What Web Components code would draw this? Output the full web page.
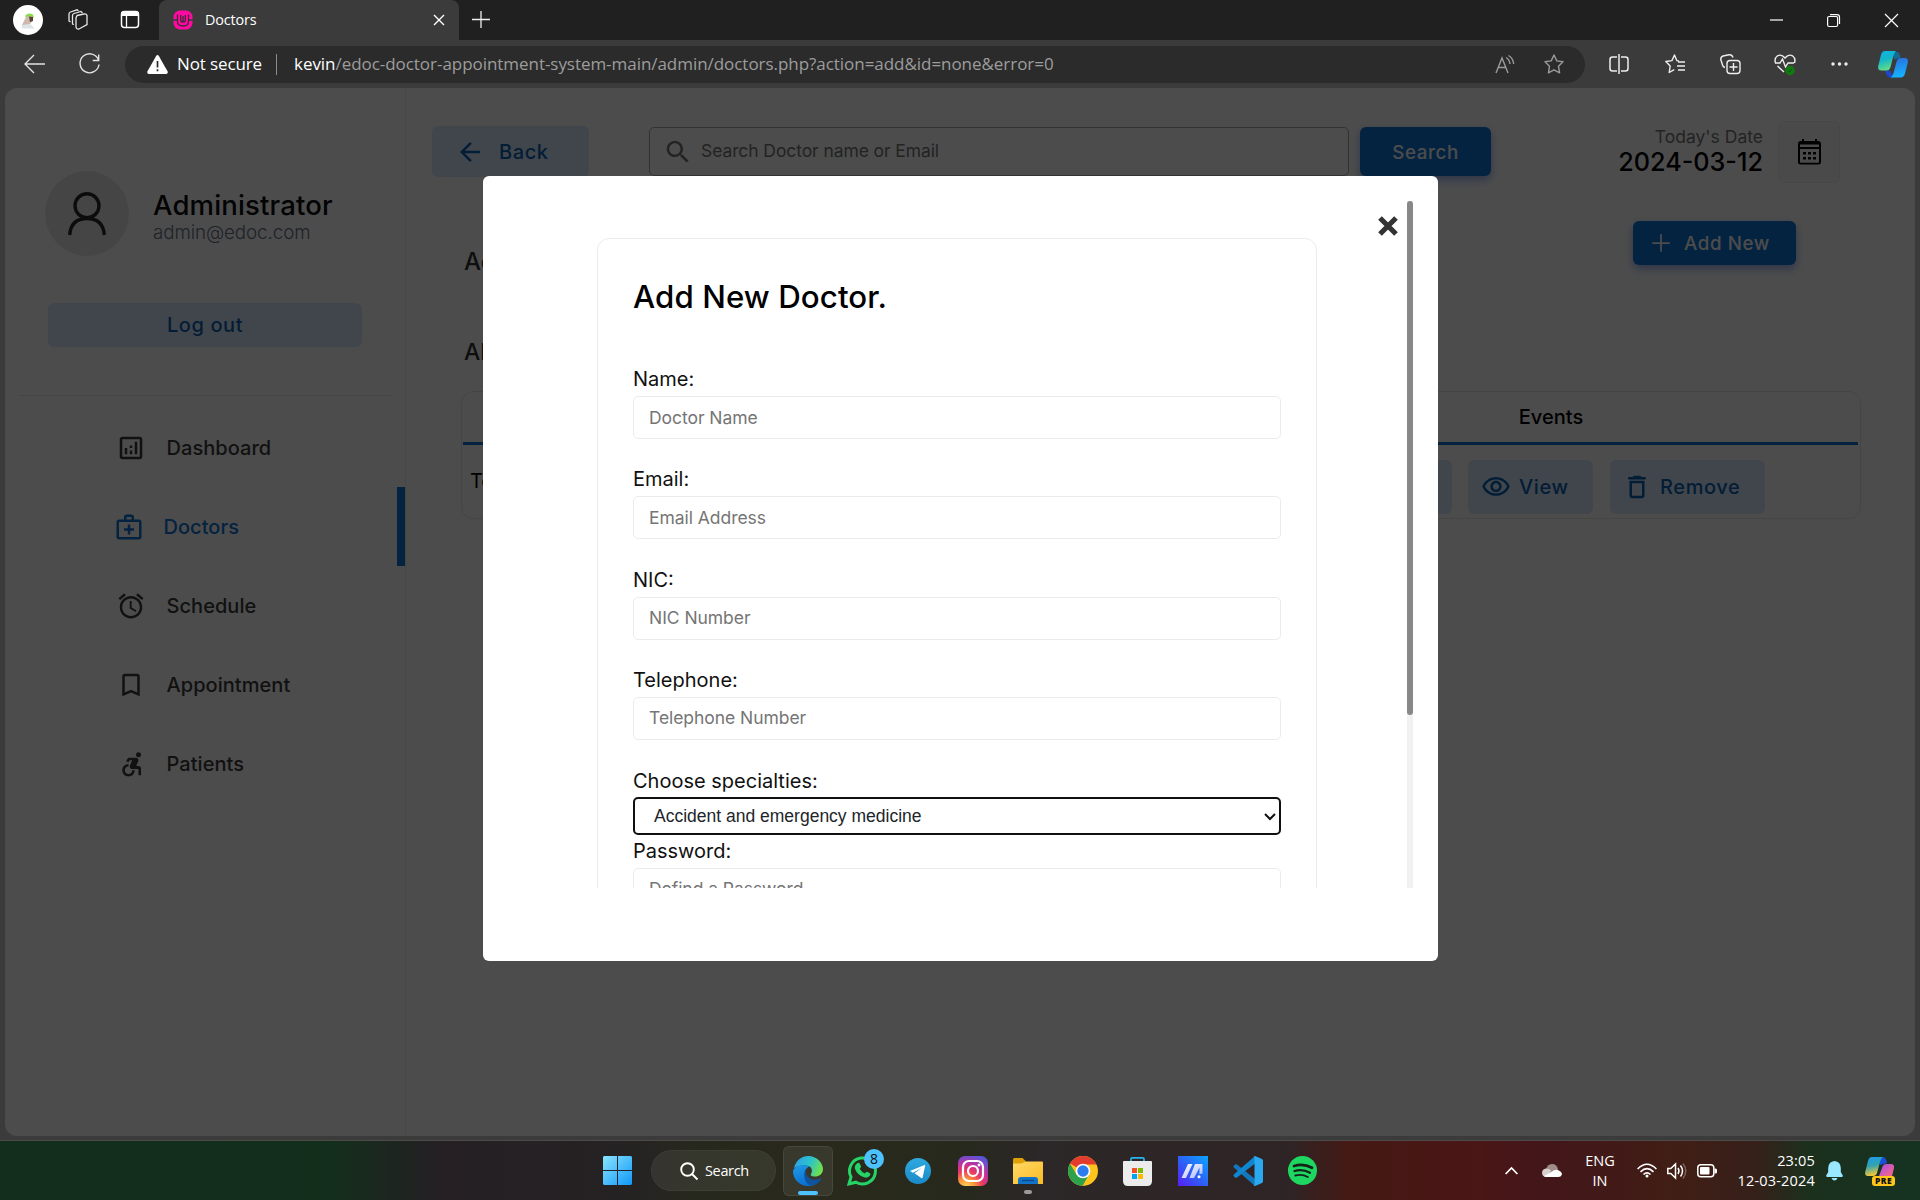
<!DOCTYPE html>
<html lang="en">
<head>
<meta charset="utf-8">
<title>Doctors</title>
<style>
html,body{margin:0;padding:0;background:#3b3b3b;overflow:hidden}
body{width:1920px;height:1200px;display:flex;flex-direction:column;font-family:Inter,sans-serif}
</style>
</head>
<body>
<browser-tabs></browser-tabs>
<browser-toolbar></browser-toolbar>
<web-page></web-page>
<win-taskbar></win-taskbar>
<script>
const define = (name, css, html) => customElements.define(name, class extends HTMLElement {
  constructor() {
    super();
    const attrs = {};
    for (const a of this.attributes) attrs[a.name] = a.value;
    this.attachShadow({mode: 'open'}).innerHTML =
      `<style>:host,*{box-sizing:border-box}svg{display:block;flex:none;overflow:visible}${css}</style>` +
      (typeof html === 'function' ? html(attrs) : html);
  }
});

/* ---------- icons ---------- */
const ICONS = {
  analytics: 'M19 3H5c-1.1 0-2 .9-2 2v14c0 1.1.9 2 2 2h14c1.1 0 2-.9 2-2V5c0-1.1-.9-2-2-2zm0 16H5V5h14v14zM7 12h2v5H7zM15 7h2v10h-2zM11 14h2v3h-2zM11 10h2v2h-2z',
  medical: 'M20 6h-4V4c0-1.1-.9-2-2-2h-4c-1.1 0-2 .9-2 2v2H4c-1.1 0-2 .9-2 2v12c0 1.1.9 2 2 2h16c1.1 0 2-.9 2-2V8c0-1.1-.9-2-2-2zM10 4h4v2h-4V4zm10 16H4V8h16v12zM13 10h-2v3H8v2h3v3h2v-3h3v-2h-3z',
  alarm: 'M22 5.72l-4.6-3.86-1.29 1.53 4.6 3.86L22 5.72zM7.88 3.39L6.6 1.86 2 5.71l1.29 1.53 4.59-3.85zM12.5 8H11v6l4.75 2.85.75-1.23-4-2.37V8zM12 4c-4.97 0-9 4.03-9 9s4.02 9 9 9c4.97 0 9-4.03 9-9s-4.03-9-9-9zm0 16c-3.87 0-7-3.13-7-7s3.13-7 7-7 7 3.13 7 7-3.13 7-7 7z',
  bookmark: 'M17 3H7c-1.1 0-1.99.9-1.99 2L5 21l7-3 7 3V5c0-1.1-.9-2-2-2zm0 15l-5-2.18L7 18V5h10v13z',
  wheelchair: 'M18 2.54a2 2 0 1 0 0 4 2 2 0 0 0 0-4zM15 17h-2c0 1.65-1.35 3-3 3s-3-1.35-3-3 1.35-3 3-3v-2c-2.76 0-5 2.24-5 5s2.24 5 5 5 5-2.24 5-5zm3-3.5h-1.86l1.67-3.67C18.42 8.5 17.44 7 15.96 7h-5.2c-.81 0-1.54.47-1.87 1.2L8.22 10l1.92.53.65-1.53H13l-1.83 4.1c-.6 1.33.39 2.9 1.85 2.9H18v5h2v-5.5c0-1.1-.9-2-2-2z',
  eye: 'M12 6c3.79 0 7.17 2.13 8.82 5.5C19.17 14.87 15.79 17 12 17s-7.17-2.13-8.82-5.5C4.83 8.13 8.21 6 12 6m0-2C7 4 2.73 7.11 1 11.5 2.73 15.89 7 19 12 19s9.27-3.11 11-7.5C21.27 7.11 17 4 12 4zm0 5c1.38 0 2.5 1.12 2.5 2.5S13.38 14 12 14s-2.5-1.12-2.5-2.5S10.62 9 12 9m0-2c-2.48 0-4.5 2.02-4.5 4.5S9.52 16 12 16s4.5-2.02 4.5-4.5S14.48 7 12 7z',
  trash: 'M16 9v10H8V9h8m-1.5-6h-5l-1 1H5v2h14V4h-3.5l-1-1zM18 7H6v12c0 1.1.9 2 2 2h8c1.1 0 2-.9 2-2V7z',
  search: 'M15.5 14h-.79l-.28-.27C15.41 12.59 16 11.11 16 9.5 16 5.91 13.09 3 9.5 3S3 5.91 3 9.5 5.91 16 9.5 16c1.61 0 3.09-.59 4.23-1.57l.27.28v.79l5 4.99L20.49 19l-4.99-5zm-6 0C7.01 14 5 11.99 5 9.5S7.01 5 9.5 5 14 7.01 14 9.5 11.99 14 9.5 14z',
  back: 'M20 11H7.83l5.59-5.59L12 4l-8 8 8 8 1.41-1.41L7.83 13H20v-2z',
  plus: 'M19 12.7h-6.3V19h-1.4v-6.3H5v-1.4h6.3V5h1.4v6.3H19z'
};
define('mi-icon', ':host{display:block;width:30px;height:30px;flex:none}', a =>
  `<svg width="30" height="30" viewBox="0 0 24 24" fill="currentColor" fill-rule="evenodd"><path d="${ICONS[a.name]}"/></svg>`);

/* ---------- browser tab strip ---------- */
define('browser-tabs', `
:host{display:flex;height:40px;background:#202020;flex:none;color:#fff}
.left{width:159px;display:flex;align-items:center;padding-left:13px}
.tab{width:300px;height:40px;background:#3b3b3b;border-radius:8px 8px 0 0;display:flex;align-items:center;padding:0 14px;font:14.4px "Open Sans",sans-serif}
.tab span{margin:-2px 0 0 12px;flex:1;letter-spacing:-.15px}
.win{margin-left:auto;display:flex;align-items:center}
`, `
<div class="left">
<svg width="30" height="30" viewBox="0 0 30 30"><circle cx="15" cy="15" r="15" fill="#fff"/><path d="M12 11q3-4 8-1.500l1 3-8 0z" fill="#8edb4a"/><path d="M13 12l6-1 1 4-3 4-6 3-2-2z" fill="#cdb9ae"/><path d="M16 11.500l4 .5 0 4-3 1z" fill="#5a4338"/><path d="M8.500 20l9-1 4 4.500-12.500 0z" fill="#dde4e8"/></svg>
<svg width="22" height="22" viewBox="0 0 22 22" style="margin-left:24px" fill="none" stroke="#e6e6e6" stroke-width="1.3"><path d="M10 7l7-1.5q2.500-.4 3 1.500v9l-8 4.500q-3 .5-3-2.500V9.500z" transform="translate(0 -.5)"/><path d="M7 15.500l-1.500-.5V6.500q0-1.500 1.500-2l7-2 1.500 1.500M3.500 13L2 12V5q0-1.500 1.500-2L10 .8l1.500 1"/></svg>
<svg width="20" height="20" viewBox="0 0 20 20" style="margin-left:31px" fill="none" stroke="#fff"><rect x="1.500" y="1.500" width="17" height="16" rx="3" stroke-width="1.500"/><path d="M1 6V4q0-3 3-3h12q3 0 3 3v2z" fill="#fff" stroke="none"/><path d="M6.500 6v12" stroke-width="1.300"/></svg>
</div>
<div class="tab">
<svg width="20" height="20" viewBox="0 0 20 20"><rect x=".5" y=".5" width="19" height="19" rx="6.500" fill="#ff0aa0"/><path d="M4.500 4.500v7q0 4.500 5.500 4.500t5.500-4.500v-7M7.700 5v5q0 2 1.200 2t1.100-2V6m0 4q0 2 1.100 2t1.200-2V5" fill="none" stroke="#3b2a35" stroke-width="1.300"/><path d="M0 10h4M16 10h4" stroke="#3b3b3b" stroke-width="1.300"/></svg>
<span>Doctors</span>
<svg width="10" height="10" viewBox="0 0 10 10" style="margin-right:1px"><path d="M0 0l10 10M10 0L0 10" stroke="#fff" stroke-width="1.400"/></svg>
</div>
<svg width="18" height="18" viewBox="0 0 18 18" style="margin:11px 0 0 13px"><path d="M9 0v17M0 8.500h18" stroke="#eee" stroke-width="1.300"/></svg>
<div class="win">
<svg width="13" height="13" viewBox="0 0 13 13"><path d="M0 6h13" stroke="#fff" stroke-width="1.200"/></svg>
<svg width="13" height="13" viewBox="0 0 13 13" style="margin-left:44px" fill="none" stroke="#fff" stroke-width="1.200"><rect x=".6" y="2.500" width="10" height="10" rx="1.500"/><path d="M3 .6h7q2.500 0 2.500 2.500v7"/></svg>
<svg width="13" height="13" viewBox="0 0 13 13" style="margin:0 22px 0 45px"><path d="M0 0l13 13M13 0L0 13" stroke="#fff" stroke-width="1.200"/></svg>
</div>`);

/* ---------- address bar row ---------- */
define('browser-toolbar', `
:host{display:flex;height:48px;background:#3b3b3b;flex:none;align-items:center;color:#fff;font:18px "Open Sans",sans-serif}
.nav{width:125px;display:flex;padding-left:24px;align-items:center}
.pill{width:1460px;height:37px;border-radius:19px;background:#2b2b2b;display:flex;align-items:center;padding-left:22px}
.ns{margin:-2px 0 0 9px;width:84px;font-size:17px;letter-spacing:-.12px;white-space:nowrap}
.bar{width:1px;height:21px;background:#8b8b8b;margin:0 17px 0 15px}
.url{flex:1;color:#9d9d9d;font-size:17px;letter-spacing:-.045px;white-space:nowrap;margin-top:-2px}
.url b{font-weight:400;color:#fff}
.ext{display:flex;align-items:center;flex:1}
`, `
<div class="nav">
<svg width="22" height="20" viewBox="0 0 22 20" fill="none" stroke="#e2e2e2" stroke-width="1.400"><path d="M21 10H1M10 1L1 10l9 9"/></svg>
<svg width="21" height="21" viewBox="0 0 21 21" fill="none" stroke="#e2e2e2" stroke-width="1.400" style="margin-left:33px"><path d="M19.500 6A9.500 9.500 0 1 0 20 10.500M19.700.5v6h-6"/></svg>
</div>
<div class="pill">
<svg width="21" height="19" viewBox="0 0 21 19"><path d="M9 1.200q1.500-2.200 3 0l8.500 15q1 2.300-1.500 2.800H2Q-.5 18.500.5 16.200z" fill="#fff"/><path d="M10.500 6v6.500M10.500 14.200v2" stroke="#2b2b2b" stroke-width="1.700"/></svg>
<span class="ns">Not secure</span><span class="bar"></span>
<span class="url"><b>kevin</b>/edoc-doctor-appointment-system-main/admin/doctors.php?action=add&amp;id=none&amp;error=0</span>
<svg width="20" height="19" viewBox="0 0 20 19" fill="none" stroke="#9a9a9a" stroke-width="1.400"><path d="M1 18L7 3l6 15M3.200 12.500h7.600M11 2.500q3.500 2 4 6.500M13.500.5q4.500 2.500 5.200 8.500"/></svg>
<svg width="20" height="20" viewBox="0 0 20 20" fill="none" stroke="#9a9a9a" stroke-width="1.400" stroke-linejoin="round" style="margin:0 21px 0 29px"><path d="M10 1l2.800 5.900 6.200.9-4.500 4.500 1.100 6.500L10 15.800l-5.600 3 1.100-6.500L1 7.800l6.200-.9z"/></svg>
</div>
<div class="ext">
<svg width="20" height="20" viewBox="0 0 20 20" fill="none" stroke="#eee" stroke-width="1.500" style="margin-left:24px"><path d="M8 3H3.500Q1 3 1 5.500v9Q1 17 3.500 17H8M12 3h4.500Q19 3 19 5.500v9q0 2.500-2.500 2.500H12M10 0v20"/></svg>
<svg width="21" height="20" viewBox="0 0 21 20" fill="none" stroke="#eee" stroke-width="1.400" stroke-linejoin="round" style="margin-left:36px"><path d="M14 7l-2.200-.4L9.500 1 6.900 6.600.8 7.500l4.400 4.500-1 6.500 5-2.800M13 8h7M12 12h8M13 16h7"/></svg>
<svg width="21" height="20" viewBox="0 0 21 20" fill="none" stroke="#eee" stroke-width="1.400" style="margin-left:34px"><rect x="7" y="6.500" width="13" height="13" rx="3"/><path d="M13.500 9v8M9.500 13h8M5 13.500Q3 13 2.500 11L.8 5.500Q.5 3 3 2L9 .8Q12 .5 13 3.500"/></svg>
<svg width="22" height="22" viewBox="0 0 22 22" fill="none" stroke="#eee" stroke-width="1.400" style="margin:1px 0 0 33px"><path d="M1.500 9Q0 4.500 3.500 1.800 7.500-.3 11 4q3.500-4.300 7.500-2.200Q22 4.500 20.500 9M1 9h5l2.500-4 3 8L14 9h6M3.500 12l6.500 6"/><circle cx="16" cy="16.500" r="4.700" fill="#107c10" stroke="none"/><path d="M14 16.500l1.500 1.500 2.500-3" stroke="#0a4d0a" stroke-width="1"/></svg>
<svg width="17" height="4" viewBox="0 0 17 4" fill="#eee" style="margin-left:35px"><circle cx="2" cy="2" r="1.700"/><circle cx="8.500" cy="2" r="1.700"/><circle cx="15" cy="2" r="1.700"/></svg>
<svg width="30" height="27" viewBox="0 0 30 27" style="margin-left:30px"><defs><linearGradient id="c1" x2=".3" y2="1"><stop stop-color="#0fb4e8"/><stop offset=".5" stop-color="#14b5c8"/><stop offset="1" stop-color="#5fdc8a"/></linearGradient><linearGradient id="c2" x2=".2" y2="1"><stop stop-color="#2a6bdc"/><stop offset="1" stop-color="#16b2ff"/></linearGradient></defs><path d="M14 1h5q2.500 0 3.500 5.500l-6 2z" fill="#126c96"/><path d="M7 20l5-.5 3 7h-2q-4 0-4.500-3z" fill="#1c48cf"/><path d="M7 0h11q-1.500 1-2.500 4.500L12.500 16q-1 3.500-4 3.500H3.500Q-.5 19.500.2 15L3 4q1-4 4-4z" fill="url(#c1)"/><path d="M22.500 7H27q3.500 0 2.800 4.500L27 22.500q-1 4-4.500 4H12.500q2-1 3-4.500l3-11q1-4 4-4z" fill="url(#c2)"/></svg>
</div>`);

/* ---------- shared edoc button ---------- */
define('edoc-button', `
:host{display:flex;align-items:center;border-radius:6px;font:500 20px Inter,sans-serif;letter-spacing:.6px;flex:none;white-space:nowrap;background:#d8ebfa;color:#0a62b8}
:host([kind=primary]){background:#0a76d8;color:#fff;font-size:18.750px;box-shadow:0 4px 8px rgba(57,108,240,.5)}
`, '<slot></slot>');

/* ---------- sidebar ---------- */
define('menu-item', `
:host{display:flex;align-items:center;height:79px;padding-left:111px;font:500 20px Inter,sans-serif;letter-spacing:.05px;color:#3b3b3b}
:host([active]){color:#0a76d8;padding-left:108.500px;border-right:8px solid #0a76d8}
span{margin-left:20.500px}
:host([active]) span{margin-left:20px}
`, a => `<mi-icon name="${a.icon}"></mi-icon><span><slot></slot></span>`);

define('edoc-sidebar', `
:host{display:flex;flex-direction:column;width:401px;border-right:1px solid #ebebeb;flex:none}
.profile{display:flex;align-items:center;margin:83px 0 0 40px;height:85px}
.avatar{width:84px;height:85px;border-radius:50%;background:#e8e8e8;display:flex;justify-content:center}
.id{margin:6px 0 0 24px}
.name{font:500 27.500px/32px Inter,sans-serif;letter-spacing:.16px;color:#0a0a10}
.mail{font:300 18.750px/22px Inter,sans-serif;letter-spacing:-.08px;color:#69748a;margin-top:1px}
edoc-button{margin:47px 0 0 43px;width:314px;height:44px;justify-content:center}
hr{margin:48px 12px 0 13px;border:0;height:1px;background:#ebebeb}
nav{margin-top:12px}
`, `
<div class="profile"><div class="avatar"><svg width="84" height="85" viewBox="0 0 84 85" fill="none" stroke="#2b2b2b" stroke-width="3.400"><circle cx="42" cy="34.700" r="12"/><path d="M24.700 64Q26 47.500 42 47.500T59.300 64"/></svg></div>
<div class="id"><div class="name">Administrator</div><div class="mail">admin@edoc.com</div></div></div>
<edoc-button>Log out</edoc-button>
<hr>
<nav>
<menu-item icon="analytics">Dashboard</menu-item>
<menu-item icon="medical" active>Doctors</menu-item>
<menu-item icon="alarm">Schedule</menu-item>
<menu-item icon="bookmark">Appointment</menu-item>
<menu-item icon="wheelchair">Patients</menu-item>
</nav>`);

/* ---------- main column ---------- */
define('edoc-main', `
:host{display:block;flex:1;padding-left:26px;overflow:hidden}
.top{display:flex;align-items:center;height:63px;margin-top:32px}
.back{width:157px;height:51px;padding-left:23px}
.back span{margin-left:14px}
.search{width:700px;height:49px;margin-left:60px;border:1px solid #a9a9a9;border-radius:5px;display:flex;align-items:center;padding-left:13px;font:17.500px Inter,sans-serif;letter-spacing:-.09px;color:#757575}
.search span{margin:-2px 0 0 8px}
.search mi-icon{color:#757575}
.go{width:131px;height:49px;margin-left:11px;padding-top:2px;justify-content:center}
.date{margin:-1px 0 0 auto;text-align:right}
.d1{font:17.500px/22px Inter,sans-serif;color:#777}
.d2{font:500 25.200px/28px Inter,sans-serif;color:#000}
.cal{width:62px;height:62px;margin:0 75px 0 15px;border:1px solid #ebebeb;background:#f8f8f8;border-radius:6px;display:flex;align-items:center;justify-content:center}
.row{display:flex;justify-content:space-between;align-items:center;height:44px;margin:38px 119px 0 32px;font:500 24px Inter,sans-serif;color:#313131}
.row span{margin-top:36px}
.add{width:163px;padding-left:13px;height:44px}
.add span{margin:0 0 0 8px}
h2{font:500 23px/30px Inter,sans-serif;color:#313131;margin:72px 0 0 32px}
.tbl{margin:24px 54px 0 29px;height:128px;border:1px solid #e8e8e8;border-radius:12px;padding:0 2px 0 1px}
.th{height:53px;border-bottom:3px solid #0a76d8;display:flex;justify-content:flex-end;font:500 20px/50px Inter,sans-serif;color:#000}
.th span{width:614px;text-align:center}
.tr{display:flex;justify-content:space-between;padding:15px 93px 0 7px;font:20px Inter,sans-serif}
.tr>span{margin-top:9px}
.acts{display:flex;gap:16px}
.acts edoc-button{height:54px}
.e{width:142px}.v{width:125px;padding-left:12.500px;margin-right:1px}.r{width:155px;padding-left:12px}
.v span{margin-left:8.500px}.r span{margin-left:8px}
`, `
<div class="top">
<edoc-button class="back"><mi-icon name="back"></mi-icon><span>Back</span></edoc-button>
<div class="search"><mi-icon name="search"></mi-icon><span>Search Doctor name or Email</span></div>
<edoc-button kind="primary" class="go">Search</edoc-button>
<div class="date"><div class="d1">Today's Date</div><div class="d2">2024-03-12</div></div>
<div class="cal"><svg width="23" height="26" viewBox="0 0 23 26"><path d="M4 0h2v2h11V0h2v2h1q3 0 3 3v18q0 2.500-2.500 2.500h-18Q0 25.500 0 23V5q0-3 3-3h1zM2 10v13q0 .8.800.8h17.400q.8 0 .8-.8V10zM2 5.500V8h19V5.500z" fill-rule="evenodd"/><path d="M5 13h3v2.500H5zM10 13h3v2.500h-3zM15 13h3v2.500h-3zM5 18h3v2.500H5zM10 18h3v2.500h-3zM15 18h3v2.500h-3z"/></svg></div>
</div>
<div class="row"><span>Add New Doctor</span><edoc-button kind="primary" class="add"><mi-icon name="plus"></mi-icon><span>Add New</span></edoc-button></div>
<h2>All Doctors (1)</h2>
<div class="tbl"><div class="th"><span>Events</span></div>
<div class="tr"><span>Test Doctor</span><div class="acts"><edoc-button class="e"></edoc-button><edoc-button class="v"><mi-icon name="eye"></mi-icon><span>View</span></edoc-button><edoc-button class="r"><mi-icon name="trash"></mi-icon><span>Remove</span></edoc-button></div></div></div>`);

/* ---------- modal ---------- */
define('form-field', `
:host{display:block;height:100.300px}
label{display:block;font:20px/23px Inter,sans-serif;color:#111;padding-bottom:5px}
.in{height:43px;border:1px solid #e9ecef;border-radius:5px;display:flex;align-items:center;padding:0 0 1px 15px;font:17.500px Inter,sans-serif;letter-spacing:-.05px;color:#757575}
`, a => `<label>${a.label}</label><div class="in"><slot></slot></div>`);

define('add-modal', `
:host{width:955px;height:785px;background:#fff;border-radius:6px;display:block;padding:25px 25px 0 114px}
.scroll{height:687px;display:flex;overflow:hidden}
.card{width:720px;margin-top:37px;height:900px;border:1px solid #ebebeb;border-radius:12px;padding:42px 35px 0;flex:none}
h1{font:500 31.250px/32px Inter,sans-serif;letter-spacing:.08px;margin:0 0 55px;color:#000}
.close{flex:1;display:flex;justify-content:flex-end;padding:15px 9px 0 0}
.track{width:6px;background:#f1f1f1}
.thumb{height:514px;background:#888;border-radius:3px}
.lab{font:20px/24px Inter,sans-serif;color:#111}
.sel{height:38px;margin:4px 0 4.500px;border:2px solid #101010;border-radius:5px;display:flex;align-items:center;justify-content:space-between;padding:1px 3px 0 19px;font:17.500px "Liberation Sans",Arial,sans-serif;color:#212529}
`, `
<div class="scroll"><div class="card">
<h1>Add New Doctor.</h1>
<form-field label="Name:">Doctor Name</form-field>
<form-field label="Email:">Email Address</form-field>
<form-field label="NIC:">NIC Number</form-field>
<form-field label="Telephone:">Telephone Number</form-field>
<div class="lab">Choose specialties:</div>
<div class="sel">Accident and emergency medicine<svg width="12" height="8" viewBox="0 0 12 8" fill="none" stroke="#111" stroke-width="2"><path d="M1 1l5 5 5-5"/></svg></div>
<form-field label="Password:">Defind a Password</form-field>
</div>
<div class="close"><svg width="20" height="20" viewBox="0 0 20 20" stroke="#333" stroke-width="5.200"><path d="M2 2l16 16M18 2L2 18"/></svg></div>
<div class="track"><div class="thumb"></div></div></div>`);

define('web-page', `
:host{display:block;position:relative;height:1053px;flex:none;background:#3b3b3b;padding:0 5px;border-bottom:1px solid #4d4b47}
.view{height:1048px;clip-path:inset(0 round 12px);isolation:isolate;opacity:.999;background:#4c4c4c;display:flex;position:relative}
.doc{display:flex;flex:1;background:#fff}
.veil{position:absolute;inset:0;background:rgba(0,0,0,.7);z-index:1}
add-modal{position:absolute;left:483px;top:88px;z-index:2}
`, `<div class="view"><div class="doc"><edoc-sidebar></edoc-sidebar><edoc-main></edoc-main></div><div class="veil"></div></div><add-modal></add-modal>`);

/* ---------- taskbar ---------- */
define('task-slot', ':host{width:55px;height:52px;display:flex;align-items:center;justify-content:center;flex:none}', '<slot></slot>');
define('win-taskbar', `
:host{display:flex;height:59px;flex:none;align-items:center;color:#fff;font:14.500px "Open Sans",sans-serif;
background:linear-gradient(90deg,#142e1e 0,#142e1c 330px,#1d2520 400px,#262025 440px,#252223 620px,#27281d 700px,#292a1c 800px,#27291c 960px,#2c2728 1040px,#2f2425 1290px,#451914 1350px,#4a1616 1480px,#43161a 1540px,#401e15 1680px,#36201a 1755px,#1b301d 1810px,#163322 1920px)}
.start{margin-left:603px}
.find{width:125px;height:41px;border-radius:21px;background:rgba(255,255,255,.07);border:1px solid rgba(255,255,255,.04);margin:0 7px 0 19px;display:flex;align-items:center;padding-left:28px}
.find span{margin-left:7px;letter-spacing:-.35px}
.on{width:50px;height:50px;border-radius:6px;background:rgba(255,255,255,.07);border:1px solid rgba(255,255,255,.08);display:flex;flex-direction:column;align-items:center;padding-top:9px}
.on i{width:20px;height:4px;border-radius:2px;background:#4cc2ff;margin-top:5px}
.wa{position:relative}
.wa b{position:absolute;left:17px;top:-6px;width:20px;height:20px;border-radius:50%;background:#4cc2ff;color:#111;font:14px/20px "Open Sans",sans-serif;text-align:center}
.fx{position:relative}
.fx i{position:absolute;left:11px;bottom:-10px;width:8px;height:4px;border-radius:2px;background:#9a9a9a}
.tray{margin-left:auto;display:flex;align-items:center}
.c{text-align:center;line-height:20px;width:34px}
.t{text-align:right;line-height:20px;width:80px;white-space:nowrap;letter-spacing:.18px}
`, `
<svg class="start" width="29" height="29" viewBox="0 0 29 29"><defs><linearGradient id="w" x2="1" y2="1"><stop stop-color="#8ae4ff"/><stop offset="1" stop-color="#1098f8"/></linearGradient></defs><path d="M1 0h13v14H0V1zM15 0h13l1 1v13H15zM0 15h14v14H1l-1-1zM15 15h14v13l-1 1H15z" fill="url(#w)"/></svg>
<div class="find"><svg width="18" height="18" viewBox="0 0 18 18" fill="none" stroke="#fff" stroke-width="1.900"><circle cx="7.500" cy="7.500" r="6.300"/><path d="M12 12l5.500 5.500"/></svg><span>Search</span></div>
<div class="on"><svg width="30" height="30" viewBox="0 0 30 30"><defs><linearGradient id="e1" x1=".1" y1=".2" x2="1" y2=".5"><stop stop-color="#2aa7e8"/><stop offset=".5" stop-color="#2dc3c9"/><stop offset="1" stop-color="#6fe04e"/></linearGradient><linearGradient id="e2" y2="1" x2=".4"><stop stop-color="#1e9be8"/><stop offset="1" stop-color="#0a6ed0"/></linearGradient></defs><path d="M1 12C3 4 9 0 15 0c9 0 15 7 15 13 0 5-4 7.500-8 7.500-3.500 0-5-1-4-2.500 2-3 1-8-5-8.500-5-.5-10 1-12 2.500z" fill="url(#e1)"/><path d="M13 9.500C6 8.500 1 11 0 15c0 8 6 15 15 15 5 0 9-2 12-6-7 4-15 1-15-7 0-3 1.500-5 4-6.500z" fill="url(#e2)"/><path d="M12.500 13C9 20 13 30 19 29.400 23 29 26 26.500 28 23.500c.5-1-.3-1.400-1-1C20 26 12 22 12.500 13z" fill="#0f529e"/></svg><i></i></div>
<task-slot style="margin-left:2px"><div class="wa"><svg width="31" height="31" viewBox="0 0 31 31"><path d="M2 29l2-7A13 13 0 1 1 9 27.200z" fill="none" stroke="#25d366" stroke-width="3"/><path d="M10 8.500q1.500-1.500 2.700 0l1.300 3q.2.800-1.300 2.300 1.800 3.200 5 4.700 1.700-2 2.300-1.700l3 1.500q.8.500 0 2.200-2 3-6 1.800-6.500-2-9-8.300-.8-3.500 2-5.500z" fill="#25d366"/></svg><b>8</b></div></task-slot>
<task-slot><svg width="26" height="26" viewBox="0 0 26 26"><defs><linearGradient id="t" x2="0" y2="1"><stop stop-color="#2fa9e0"/><stop offset="1" stop-color="#1b8ac8"/></linearGradient></defs><circle cx="13" cy="13" r="13" fill="url(#t)"/><path d="M5 13L19.500 7q.8 0 .6 1l-2.500 11.500q-.4 1-1.300.4L9.500 15.300l7-5.300-8.500 4.800z" fill="#fff"/></svg></task-slot>
<task-slot><svg width="30" height="30" viewBox="0 0 30 30"><defs><radialGradient id="g" cx=".27" cy="1.050" r="1.100"><stop stop-color="#ffd865"/><stop offset=".25" stop-color="#fb9a3a"/><stop offset=".5" stop-color="#ec3a60"/><stop offset=".75" stop-color="#b833a8"/><stop offset="1" stop-color="#5a55d6"/></radialGradient></defs><rect width="30" height="30" rx="7" fill="url(#g)"/><g fill="none" stroke="#fff" stroke-width="2.200"><rect x="5" y="5" width="20" height="20" rx="6"/><circle cx="15" cy="15" r="5"/></g><circle cx="21" cy="9" r="1.500" fill="#fff"/></svg></task-slot>
<task-slot><div class="fx"><svg width="30" height="26" viewBox="0 0 30 26"><defs><linearGradient id="f" x2="1" y2="1"><stop stop-color="#ffd968"/><stop offset="1" stop-color="#f9bb22"/></linearGradient></defs><path d="M0 8V1.500Q0 0 1.500 0H9.500L13 3.500 9 8z" fill="#dfa007"/><path d="M0 5.500h8L13 3.500H29q1 0 1 1V26H0z" fill="url(#f)"/><path d="M5 26v-4q0-3 3-3h14q3 0 3 3v4z" fill="#1273c8"/><path d="M9 22.500h12" stroke="#0a4c91" stroke-width="1.500"/></svg><i></i></div></task-slot>
<task-slot><svg width="30" height="30" viewBox="0 0 30 30"><circle cx="15" cy="15" r="15" fill="#fcc31e"/><path d="M15 15L2 7.500A15 15 0 0 1 28 7.500L28 8.500H15z" fill="#e33b2e"/><path d="M2 7.500A15 15 0 0 0 14.500 30L21 18.500 8.500 18.800z" fill="#2da14c"/><circle cx="15" cy="15" r="7.300" fill="#fff"/><circle cx="15" cy="15" r="5.700" fill="#2e7bf0"/></svg></task-slot>
<task-slot><svg width="29" height="30" viewBox="0 0 29 30"><path d="M8 6V3q0-1.200 1.200-1.200h10.600Q21 1.800 21 3v3" fill="none" stroke="#29b4ef" stroke-width="1.700"/><path d="M0 6q0-1 1-1h27q1 0 1 1v19q0 5-5 5H5q-5 0-5-5z" fill="#ececec"/><path d="M9 12h5v5H9z" fill="#f25022"/><path d="M15 12h5v5h-5z" fill="#7fba00"/><path d="M9 18h5v5H9z" fill="#00a4ef"/><path d="M15 18h5v5h-5z" fill="#ffb900"/></svg></task-slot>
<task-slot><svg width="30" height="30" viewBox="0 0 30 30"><defs><linearGradient id="m" x1="0" y1="1" x2="1" y2="0"><stop stop-color="#5a1cf5"/><stop offset=".4" stop-color="#3356f5"/><stop offset="1" stop-color="#0aa6ff"/></linearGradient><linearGradient id="n" y2="1"><stop stop-color="#fff"/><stop offset="1" stop-color="#a9b8ff"/></linearGradient></defs><path d="M0 0h30v30H0z" fill="url(#m)"/><path d="M10 8h4.500L8 22H3.500zM17 8h7.500v9.500L21.500 18v-6.500L16 22h-4.500z" fill="url(#n)"/><circle cx="21" cy="20.700" r="1.500" fill="#fff"/></svg></task-slot>
<task-slot><svg width="30" height="30" viewBox="0 0 30 30"><path d="M1 9.500Q2.300 7.500 4 8.500L24 24.500 22 30 .8 11.500Q0 10.500 1 9.500z" fill="#1277bd"/><path d="M1 20.500Q2.300 22.500 4 21.500L24 6 22 0 .8 18.500Q0 19.500 1 20.500z" fill="#0f86d0"/><path d="M22 0l7 3q1 .6 1 1.800v20.400q0 1.200-1 1.800l-7 3q-1 0-1.500-.8.800.3 1-.9V2q-.2-1.200-1-.9.500-.8 1.500-1.100z" fill="#2aa8f0"/></svg></task-slot>
<task-slot><svg width="29" height="29" viewBox="0 0 29 29"><circle cx="14.500" cy="14.500" r="14.500" fill="#1ed760"/><g fill="none" stroke="#14221a" stroke-linecap="round"><path d="M6 10q9.500-2.800 18 1.800" stroke-width="2.700"/><path d="M6.500 15q8-2.200 15.500 1.700" stroke-width="2.300"/><path d="M7.300 19.500q7-1.700 12.500 1.500" stroke-width="1.900"/></g></svg></task-slot>
<div class="tray">
<svg width="13" height="8" viewBox="0 0 13 8" fill="none" stroke="#fff" stroke-width="1.700"><path d="M.6 7l5.900-6 5.900 6"/></svg>
<svg width="20" height="13" viewBox="0 0 20 13" style="margin-left:24px"><path d="M4 6Q5 0 10 0q5 0 6 5.500L9 9z" fill="#a08c8b"/><path d="M0 8.500Q.3 5 4 4.500q3-.2 5 2L6 13H4Q0 12.500 0 8.500z" fill="#d8cfce"/><path d="M2 12q4-2 8-4.500 3-2.500 6-1.500t4 3.500q-.3 3.500-4 3.500H4q-1.500 0-2-1z" fill="#fff"/></svg>
<div class="c" style="margin-left:21px">ENG<br>IN</div>
<svg width="20" height="15" viewBox="0 0 20 15" fill="none" stroke="#fff" stroke-width="1.600" style="margin-left:20px"><path d="M.6 6Q10-3.500 19.400 6M3.500 8.800q6.500-6.200 13 0M6.500 11.500q3.500-3.300 7 0"/><circle cx="10" cy="13" r="1.500" fill="#fff" stroke="none"/></svg>
<svg width="20" height="16" viewBox="0 0 20 16" fill="none" stroke="#fff" stroke-width="1.500" style="margin-left:10px"><path d="M.8 5.500h3L8.500 1v14L3.800 10.500h-3zM11 5q2 3 0 6M13.500 2.500q4 5.500 0 11"/><path d="M16 .5q5.500 7.500 0 15" stroke="#7c5f58"/></svg>
<svg width="20" height="14" viewBox="0 0 20 14" style="margin-left:10px"><rect x=".8" y=".8" width="16" height="12" rx="3" fill="none" stroke="#fff" stroke-width="1.500"/><rect x="3" y="3" width="9.500" height="7.600" rx="1" fill="#fff"/><path d="M17.500 4.500h1q1.500 0 1.500 1.500v2q0 1.500-1.500 1.500h-1z" fill="#fff"/></svg>
<div class="t" style="margin-left:18px">23:05<br>12-03-2024</div>
<svg width="17" height="20" viewBox="0 0 17 20" style="margin-left:11px" fill="#99e8ff"><path d="M8.500 0Q14.500.5 14.800 7v4l2 3.500q.4 1.300-1 1.500H1.200q-1.400-.2-1-1.500l2-3.500V7Q2.500.5 8.500 0z"/><path d="M5.500 17h6q-1 2.500-3 2.500t-3-2.500z"/></svg>
<svg width="30" height="29" viewBox="0 0 30 29" style="margin:2px 25px 0 22px"><defs><linearGradient id="p" x2=".2" y2="1"><stop stop-color="#1e9bf0"/><stop offset=".5" stop-color="#2fa3b0"/><stop offset="1" stop-color="#f2c53a"/></linearGradient><linearGradient id="q" y2="1"><stop stop-color="#a34bf0"/><stop offset="1" stop-color="#ff6a7a"/></linearGradient></defs><path d="M13 0h5q3 0 4 6l-7 2z" fill="#1a4fd6"/><path d="M7 0h11q-2 1-3 5l-3 11q-1 3-4 3H3q-3.500 0-2.800-4L3 4q1-4 4-4z" fill="url(#p)"/><path d="M21 7h5q3.500 0 3 4l-2 8H14l3-8q1-4 4-4z" fill="url(#q)"/><rect x="7" y="19" width="23" height="10" rx="3" fill="#ffc71a"/><text x="18.500" y="27" font-family="Open Sans" font-size="8.500" font-weight="800" text-anchor="middle" fill="#111" letter-spacing=".4">PRE</text></svg>
</div>`);
</script>
</body>
</html>
